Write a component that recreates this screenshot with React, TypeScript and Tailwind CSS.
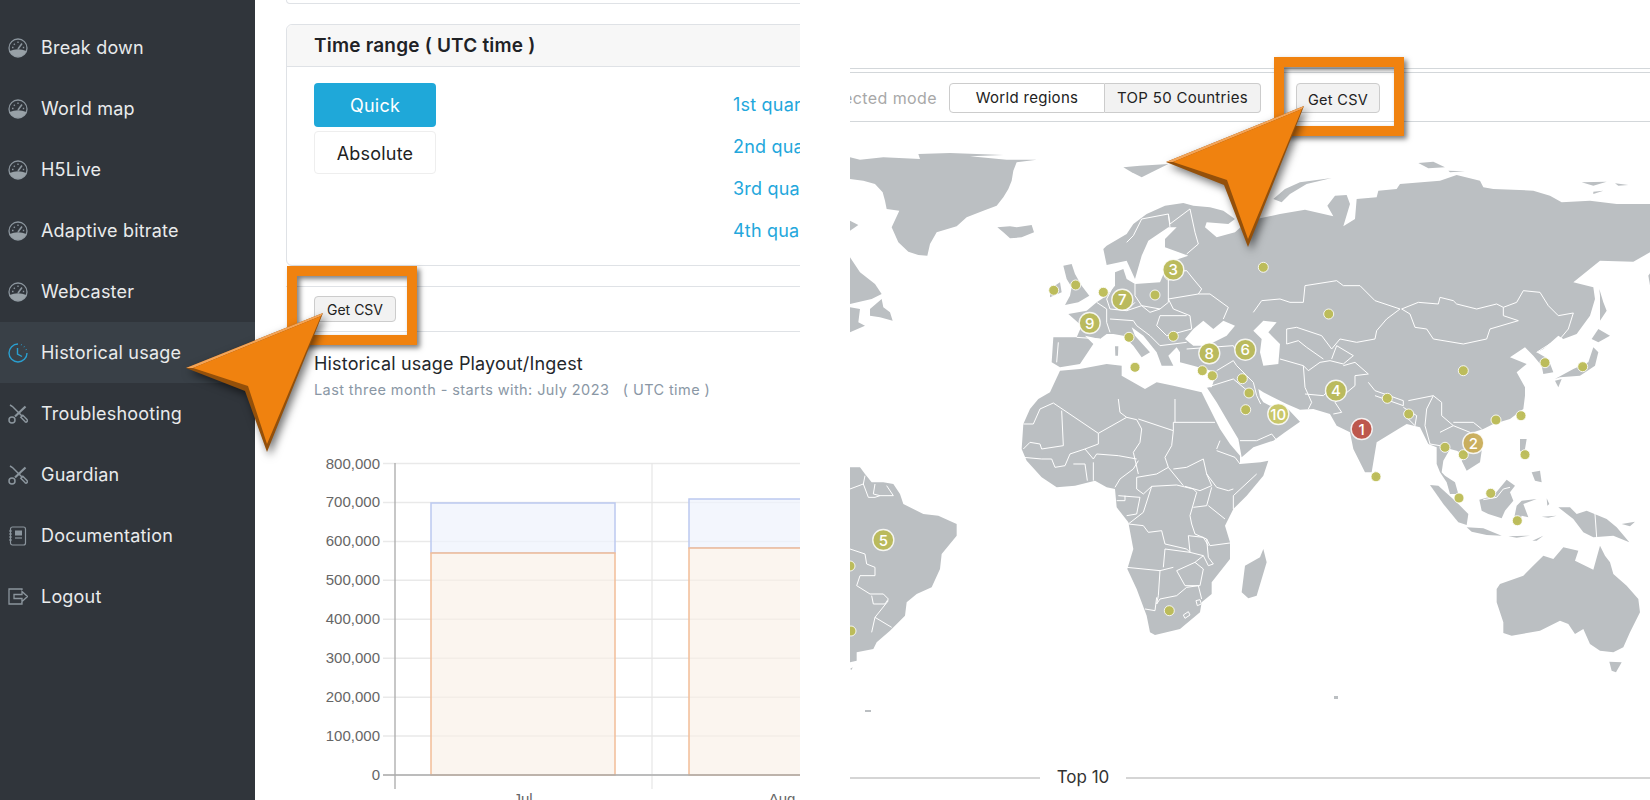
const navItems = [
  { label: "Break down", icon: "gauge" },
  { label: "World map", icon: "gauge" },
  { label: "H5Live", icon: "gauge" },
  { label: "Adaptive bitrate", icon: "gauge" },
  { label: "Webcaster", icon: "gauge" },
  { label: "Historical usage", icon: "clock", active: true },
  { label: "Troubleshooting", icon: "tools" },
  { label: "Guardian", icon: "tools" },
  { label: "Documentation", icon: "doc" },
  { label: "Logout", icon: "logout" },
];

function NavIcon({ name }: { name: string }) {
  if (name === "gauge") {
    return (
      <svg viewBox="0 0 20 20" className="w-[20px] h-[20px] text-[#8b959d]" fill="none" stroke="currentColor" strokeWidth="1.3">
        <circle cx="10" cy="10" r="9" />
        <path d="M1.6 13 Q10 9.5 18.4 13 A9 9 0 0 1 1.6 13Z" fill="#98a1a7" stroke="none" />
        <path d="M10 11 L14 5.5" strokeWidth="1.6" />
        <path d="M4 9.5h1.5M5.8 5.8l1 1M10 3.5v1.5M14.8 9.5h1.4" />
      </svg>
    );
  }
  if (name === "clock") {
    return (
      <svg viewBox="0 0 20 20" className="w-[20px] h-[20px] text-[#2a9fd0]" fill="none" stroke="currentColor" strokeWidth="1.4">
        <path d="M10 1 A9 9 0 1 0 19 10" />
        <path d="M13 1.6 L13.6 1.9M16 3.6 L16.4 4M18 6.4 L18.3 7" />
        <path d="M9.5 5 V11 L14 13.5" />
      </svg>
    );
  }
  if (name === "tools") {
    return (
      <svg viewBox="0 0 20 20" className="w-[20px] h-[20px] text-[#8b959d]" fill="none" stroke="currentColor" strokeWidth="1.5">
        <path d="M2 1 L4.5 2.5 L14 12" />
        <path d="M12.8 13.2 L14.8 11.2 L19 15.6 A1.4 1.4 0 0 1 17 17.6Z" />
        <path d="M17.5 2.5 L7 12.5" strokeWidth="2.2" />
        <circle cx="4" cy="16" r="3" />
      </svg>
    );
  }
  if (name === "doc") {
    return (
      <svg viewBox="0 0 20 20" className="w-[20px] h-[20px] text-[#8b959d]" fill="none" stroke="currentColor" strokeWidth="1.2">
        <rect x="2.5" y="1" width="15" height="18" rx="2" />
        <path d="M1 5h3M1 8h3M1 11h3M1 14h3" />
        <rect x="7" y="4.5" width="7" height="5" fill="currentColor" stroke="none" />
        <path d="M7 12h7" />
      </svg>
    );
  }
  return (
    <svg viewBox="0 0 20 20" className="w-[20px] h-[20px] text-[#8b959d]" fill="none" stroke="currentColor" strokeWidth="1.3">
      <path d="M14 3 V2 H1 V17 H14 V15" />
      <path d="M6 7.5 H14 V4.5 L19.5 9.5 L14 14.5 V11.5 H6Z" />
    </svg>
  );
}

function Sidebar() {
  return (
    <div className="w-[255px] shrink-0 h-full bg-[#30353b] pt-[17px] text-[18px] tracking-[0.2px] text-[#e9ebec]">
      {navItems.map((item) => (
        <div
          key={item.label}
          className={`h-[61px] flex items-center pl-[8px] gap-[13px] ${item.active ? "bg-[#394047]" : ""}`}
        >
          <NavIcon name={item.icon} />
          <span>{item.label}</span>
        </div>
      ))}
    </div>
  );
}

const yLabels = ["800,000", "700,000", "600,000", "500,000", "400,000", "300,000", "200,000", "100,000", "0"];

function UsageChart() {
  const y0 = 462.5;
  const step = 38.94;
  return (
    <svg viewBox="286 450 514 350" className="w-[514px] h-[350px] font-[family-name:'Liberation_Sans',sans-serif]">
      {yLabels.map((label, i) => {
        const y = y0 + step * i;
        return (
          <g key={label}>
            <line x1="383" x2="800" y1={y} y2={y} stroke="#e9e9e9" strokeWidth="1.5" />
            <text x="380" y={y + 5} textAnchor="end" fontSize="15" fill="#666">
              {label}
            </text>
          </g>
        );
      })}
      <line x1="652" x2="652" y1="462" y2="788" stroke="#e6e6e6" strokeWidth="1.2" />
      <rect x="431" y="502" width="184" height="50" fill="#eef2fc" fillOpacity="0.7" stroke="#bcc9ef" strokeWidth="1.5" />
      <rect x="431" y="552" width="184" height="222" fill="#f9efe6" fillOpacity="0.65" stroke="#f2bd98" strokeWidth="1.5" />
      <rect x="689" y="498" width="184" height="49" fill="#eef2fc" fillOpacity="0.7" stroke="#bcc9ef" strokeWidth="1.5" />
      <rect x="689" y="547" width="184" height="227" fill="#f9efe6" fillOpacity="0.65" stroke="#f2bd98" strokeWidth="1.5" />
      <line x1="395" x2="395" y1="462" y2="788" stroke="#a9a9a9" strokeWidth="1.3" />
      <line x1="383" x2="800" y1="774" y2="774" stroke="#ababab" strokeWidth="1.6" />
      <text x="523" y="803" textAnchor="middle" fontSize="15" fill="#666">
        Jul
      </text>
      <text x="782" y="803" textAnchor="middle" fontSize="15" fill="#666">
        Aug
      </text>
    </svg>
  );
}

function HistoricalPanel() {
  return (
    <div className="w-[545px] shrink-0 h-full overflow-hidden pl-[31px]">
      <div className="w-[700px] h-[4px] border-[1.5px] border-t-0 border-[#dfe2e6] rounded-b-[6px]" />
      <div className="w-[700px] h-[242px] mt-[20px] border-[1.5px] border-[#dfe2e6] rounded-[6px]">
        <div className="h-[42px] flex items-center pl-[27px] pt-[2px] bg-[#f7f7f7] border-b-[1.5px] border-[#dfe2e6] rounded-t-[6px] text-[19px] tracking-[0.2px] font-semibold text-[#1f2226]">
          Time range ( UTC time )
        </div>
        <div className="flex pl-[27px] pt-[16px] tracking-[0.2px]">
          <div className="flex flex-col gap-[4px] w-[122px] text-[18px]">
            <div className="h-[44px] flex items-center justify-center rounded-[4px] bg-[#1fa8d9] text-white">Quick</div>
            <div className="h-[43px] pt-[1px] flex items-center justify-center rounded-[4px] border-[1.5px] border-[#eeeeee] text-[#222]">Absolute</div>
          </div>
          <div className="ml-[297px] pt-[1px] text-[18px] leading-[42px] text-[#23a7dc] whitespace-nowrap">
            <div>1st quarter</div>
            <div>2nd quarter</div>
            <div>3rd quarter</div>
            <div>4th quarter</div>
          </div>
        </div>
      </div>
      <div className="w-[700px] h-[46px] mt-[20px] border-y-[1.5px] border-[#dfe2e6] flex items-center pl-[28px]">
        <button className="w-[82px] h-[26px] rounded-[4px] border border-[#cccccc] bg-[#f2f2f2] text-[14px] text-[#222]">Get CSV</button>
      </div>
      <div className="pl-[28px] pt-[19px] text-[18px] leading-[26px] tracking-[0.17px] text-[#24272b] whitespace-nowrap">Historical usage Playout/Ingest</div>
      <div className="pl-[28px] pt-[2px] text-[14.5px] leading-[22px] tracking-[0.41px] text-[#8a97a5] whitespace-pre">
        {"Last three month - starts with: July 2023   ( UTC time )"}
      </div>
      <div className="mt-[50px] -ml-[0px]">
        <UsageChart />
      </div>
    </div>
  );
}

const smallDots = [
  [1053.7, 291.3], [1075.7, 286], [1103.3, 293.3], [1155, 296], [1129, 338.3], [1135, 368.3], [1173.3, 337.3],
  [1202.3, 371.7], [1212.3, 376.7], [1242.3, 379.7], [1249, 394], [1245.7, 410.7], [1169.3, 276],
  [1263.3, 268.3], [1328.7, 315], [1463.3, 371.7], [1545, 363.7], [1582.7, 367.7], [1387.3, 399.3], [1408.7, 415],
  [1496, 421], [1521, 416.7], [1445, 448.3], [1463.3, 455.7], [1525, 455.7], [1376, 477.7],
  [1459, 499], [1490.7, 494.3], [1517.3, 521.7], [1169.3, 611.7], [850, 567], [851, 632],
];

const rankDots = [
  { n: 3, x: 1173.3, y: 270.7, c: "#b9b957" },
  { n: 7, x: 1122.3, y: 300.7, c: "#b9b957" },
  { n: 9, x: 1089.7, y: 324, c: "#b9b957" },
  { n: 8, x: 1209.3, y: 354.3, c: "#b9b957" },
  { n: 6, x: 1245.3, y: 350.7, c: "#b9b957" },
  { n: 4, x: 1336, y: 391.7, c: "#b9b957" },
  { n: 10, x: 1278.3, y: 415, c: "#c9c765" },
  { n: 1, x: 1361.7, y: 430, c: "#bd5146" },
  { n: 2, x: 1473.3, y: 444, c: "#c9ad58" },
  { n: 5, x: 883.3, y: 541, c: "#b9b957" },
];

const land = "#bbbfc2";

function WorldMap() {
  return (
    <svg viewBox="850 130 800 635" className="w-[800px] h-[635px] font-[family-name:Inter,sans-serif]">
      {/* north atlantic, europe, asia */}
      <g transform="translate(840 140) scale(0.33333)" fill={land}>
        <polygon points="30,55 60,62 130,55 240,60 235,45 330,42 490,48 390,52 500,62 590,62 530,70 520,95 515,125 505,150 490,175 470,200 430,215 380,235 350,262 290,280 270,315 262,350 235,348 205,338 175,310 155,265 178,215 140,210 135,185 128,160 105,135 70,125 30,120" />
        <polygon points="30,245 55,258 30,275" />
        <polygon points="30,355 60,400 105,435 125,465 95,480 30,495" />
        <polygon points="90,510 125,480 130,505 150,520 158,545 120,535 90,530" />
        <polygon points="30,505 60,510 55,550 75,560 30,580" />
        <polygon points="472,265 510,262 530,265 575,258 582,280 545,295 510,298 490,280" />
        <polygon points="850,85 900,80 985,75 935,100 905,115 875,100" />
        <polygon points="670,380 695,375 705,405 725,440 748,470 715,490 675,498 690,470 695,445 680,420" />
        <polygon points="630,450 660,430 665,460 630,475" />
        <polygon points="825,622 835,622 834,650 826,650" />
        <polygon points="790,330 800,320 860,285 880,255 920,225 975,200 1030,192 1060,200 1110,205 1150,215 1185,240 1165,255 1100,250 1095,265 1130,295 1185,280 1205,262 1260,238 1320,225 1395,212 1480,232 1462,200 1485,170 1520,168 1530,195 1510,262 1545,240 1550,180 1610,175 1615,155 1670,150 1680,135 1800,125 1850,108 1920,125 1930,145 1960,150 2080,155 2130,170 2165,190 2250,185 2330,195 2430,195 2430,340 2380,368 2280,365 2200,430 2260,445 2265,480 2250,530 2210,585 2170,600 2155,590 2110,630 2090,640 2125,660 2140,700 2110,705 2105,680 2080,650 2055,625 2010,655 2060,675 2030,700 2055,745 2055,770 2050,810 2010,840 1960,855 1930,870 1900,880 1925,935 1920,970 1880,995 1865,965 1880,950 1850,935 1830,930 1810,965 1805,1000 1815,1010 1845,1030 1855,1065 1830,1065 1820,1030 1800,1000 1790,975 1790,925 1765,915 1740,865 1700,855 1675,870 1610,910 1595,1000 1575,1000 1540,930 1530,880 1490,860 1470,825 1420,810 1380,812 1340,795 1270,760 1255,750 1260,775 1270,790 1290,800 1330,795 1380,848 1335,880 1300,905 1240,925 1205,955 1195,900 1165,850 1130,790 1100,745 1115,745 1130,700 1060,680 1020,670 1020,640 1010,625 985,650 1000,680 965,680 950,640 910,590 875,565 885,590 930,640 905,655 880,620 850,590 820,585 800,585 780,600 735,590 760,615 720,675 660,685 635,670 640,595 710,595 725,560 685,525 740,515 770,490 800,470 825,440 825,400 850,390 860,420 885,435 960,430 975,395 1000,365 1045,350 975,325 975,300 1010,265 985,265 925,305 905,350 885,420 860,365 800,378" />
        {/* inland seas */}
        <polygon fill="#ffffff" points="1035,600 1060,570 1090,545 1120,570 1150,545 1185,560 1160,590 1130,605 1100,620 1060,620" />
        <polygon fill="#ffffff" points="1240,575 1270,545 1310,550 1285,580 1320,615 1315,675 1270,680 1260,640 1265,600" />
        {/* asia islands */}
        <polygon points="1735,72 1780,68 1815,85 1765,88" />
        <polygon points="1825,95 1875,97 1830,100" />
        <polygon points="2225,130 2300,128 2260,140" />
        <polygon points="2325,133 2365,138 2335,140" />
        <polygon points="2260,158 2290,155 2260,165" />
        <polygon points="1300,180 1335,150 1380,130 1475,117 1400,135 1350,165 1325,190" />
        <polygon points="2145,720 2200,690 2245,670 2260,625 2275,640 2265,680 2220,710 2160,715" />
        <polygon points="2255,600 2275,570 2310,590 2275,610" />
        <polygon points="2145,725 2165,720 2155,745" />
        <polygon points="2278,450 2290,490 2300,515 2280,545 2280,470" />
        <polygon points="1605,995 1618,1015 1600,1025" />
        <polygon points="2045,820 2052,815 2048,840" />
        <polygon points="2425,410 2432,400 2432,450" />
        {/* borders */}
        <g fill="none" stroke="#ffffff" strokeWidth="3" strokeLinejoin="round">
          <polyline points="860,310 880,290 905,240 985,225 990,255 1050,210 1065,280 1075,315 1040,345" />
          <polyline points="985,225 990,265" />
          <polyline points="975,400 1040,395 1060,420 1085,450 1075,465 1110,465 1165,505 1150,540" />
          <polyline points="985,405 985,490 960,510 905,500 885,470 885,435" />
          <polyline points="1075,465 985,480 1000,510 1050,530 1055,570 980,590 950,560 960,530 1040,530" />
          <polyline points="820,440 800,480 810,510 860,515 885,490" />
          <polyline points="770,490 800,510 800,550 810,580" />
          <polyline points="810,540 880,545 890,560 930,590 960,620 1040,610" />
          <polyline points="860,515 905,500 930,520 960,510" />
          <polyline points="710,595 780,600" />
          <polyline points="655,610 650,670" />
          <polyline points="1130,695 1180,665 1190,680 1240,730 1250,770 1262,795" />
          <polyline points="1040,630 1180,620 1200,660" />
          <polyline points="1100,745 1180,720 1240,770" />
          <polyline points="1240,520 1265,485 1320,480 1350,490 1390,490 1395,440 1490,425 1510,440 1560,440 1605,485 1680,510 1640,540 1610,575 1605,600 1550,610 1500,600 1475,630" />
          <polyline points="1340,570 1370,565 1445,590 1475,630" />
          <polyline points="1340,570 1340,615 1375,605 1400,625 1450,660" />
          <polyline points="1320,660 1390,680 1405,695 1440,670 1470,665 1510,675 1540,650 1490,620 1475,660" />
          <polyline points="1390,680 1395,745 1415,790 1405,810" />
          <polyline points="1395,765 1450,770 1490,730" />
          <polyline points="1510,680 1545,670 1585,705 1545,710 1545,740 1485,790 1505,820 1480,825" />
          <polyline points="1585,730 1605,755 1690,785 1690,800 1605,770" />
          <polyline points="1705,785 1780,770 1805,790 1805,830 1840,860" />
          <polyline points="1690,805 1730,830 1725,860 1695,830" />
          <polyline points="1780,770 1760,810 1755,860 1770,915 1800,920" />
          <polyline points="1800,880 1840,860 1890,880" />
          <polyline points="1840,850 1900,850 1925,870" />
          <polyline points="1685,510 1735,490 1795,495 1800,475 1840,485 1850,495 1910,510 1970,495 1990,505 1990,530 2035,545 1950,570 1940,600 1870,615 1780,600 1760,570 1725,565 1710,525 1685,510" />
          <polyline points="1990,505 2030,490 2050,455 2100,460 2125,500 2155,530 2200,522 2185,570 2160,600" />
          <polyline points="2090,640 2145,605" />
        </g>
      </g>

      {/* africa */}
      <g transform="translate(1000 400) scale(0.33333)" fill={land}>
        <polygon points="150,-20 180,-85 240,-90 320,-105 365,-100 365,-70 435,-30 470,-50 520,-40 605,-20 615,0 660,90 690,135 720,170 720,195 782,190 805,185 790,230 740,290 700,330 675,380 690,430 690,480 635,550 635,585 605,610 600,640 540,690 465,708 450,700 440,650 410,570 382,510 400,450 385,370 350,325 345,270 320,265 285,245 225,260 170,265 125,235 80,185 65,150 70,75 90,30 115,0" />
        <polygon points="790,450 800,490 770,590 745,598 725,580 735,500 780,475" />
        <g fill="none" stroke="#ffffff" strokeWidth="3" strokeLinejoin="round">
          <polyline points="160,12 295,103 380,55 410,62 425,90 420,130 400,160 415,225" />
          <polyline points="415,60 520,95 520,70 645,70" />
          <polyline points="525,0 525,70" />
          <polyline points="355,0 360,40 380,55" />
          <polyline points="295,103 295,135 255,150 210,165 195,200 165,205 155,180 125,180 70,175" />
          <polyline points="185,35 190,140 125,150 120,135 90,130 70,150" />
          <polyline points="70,75 100,75 120,30 160,12" />
          <polyline points="220,195 255,195 262,245" />
          <polyline points="280,190 280,245" />
          <polyline points="255,150 280,180 290,165 355,170 410,180" />
          <polyline points="415,185 400,210 360,240 345,265" />
          <polyline points="520,95 515,140 495,175 505,205 470,225 410,235 410,270 430,285 455,262 530,258 580,270 590,280" />
          <polyline points="505,205 550,260" />
          <polyline points="455,262 430,340 385,375 430,380 445,400 485,395 495,435 560,450 570,460 565,410 610,415 625,440" />
          <polyline points="650,150 660,125" />
          <polyline points="650,155 705,175 720,195" />
          <polyline points="620,225 650,265 685,275 700,270" />
          <polyline points="520,210 560,205 610,180 620,225 635,260 600,275 555,262" />
          <polyline points="700,330 700,290 770,225" />
          <polyline points="625,320 675,360" />
          <polyline points="590,280 570,350 575,375 585,405 620,420 630,440 690,432" />
          <polyline points="635,265 620,320 580,325" />
          <polyline points="380,505 480,515 520,505" />
          <polyline points="495,450 490,505" />
          <polyline points="495,450 570,460 610,470 585,490 530,515 555,560 600,560 610,510 585,490" />
          <polyline points="620,420 625,475 640,495 625,500 610,470" />
          <polyline points="480,515 475,590 470,615 480,600 530,590 560,565 595,560 605,600" />
          <polyline points="470,595 465,635 435,630" />
          <polyline points="355,290 420,295 410,345 380,350" />
          <polyline points="350,305 375,305 375,290" />
          <polyline points="720,125 770,125 815,105 835,130" />
          <polygon points="550,648 565,638 570,648 555,658" />
          <polygon points="588,605 600,602 604,615 592,620" />
        </g>
      </g>

      {/* south east asia and australia */}
      <g transform="translate(1400 440) scale(0.33333)" fill={land}>
        <polygon points="90,138 115,140 170,190 205,225 200,258 175,250 130,195" />
        <polygon points="200,265 250,268 305,290 260,288 215,278" />
        <polygon points="238,182 280,170 320,122 345,140 330,160 340,185 315,215 305,238 265,225 245,215" />
        <polygon points="350,200 365,185 410,180 370,195 385,235 365,230 355,255 340,250" />
        <polygon points="360,0 380,0 375,30 385,55 360,35" />
        <polygon points="395,100 420,95 425,130 405,125" />
        <polygon points="475,205 510,205 530,225 560,215 620,240 650,265 688,310 640,290 580,295 550,280 520,240" />
        <polygon points="425,233 470,230 445,236" />
        <polygon points="325,292 390,290 350,296" />
        <polygon points="397,305 430,290 410,305" />
        <polygon points="665,255 705,248 690,262" />
        <polygon points="440,178 448,195 442,200" />
        <polygon points="290,450 300,435 370,410 395,385 430,350 460,360 490,325 535,335 525,365 580,392 600,320 615,350 630,370 640,405 680,440 715,480 720,520 690,580 670,625 640,640 600,635 570,615 550,570 525,585 505,555 480,545 420,575 335,590 310,582 310,550 290,490" />
        <polygon points="628,668 665,670 648,700 635,695" />
        <g fill="none" stroke="#ffffff" strokeWidth="3">
          <polyline points="585,225 590,295" />
          <polyline points="250,182 290,175 310,150 330,145" />
        </g>
      </g>

      {/* south america */}
      <g transform="translate(850 440) scale(0.33333)" fill={land}>
        <polygon points="0,85 30,85 45,105 65,130 100,130 130,135 150,165 160,195 220,225 265,230 320,255 320,290 275,345 270,390 245,445 200,465 170,490 165,530 120,575 80,610 70,630 20,640 20,665 0,670" />
        <polygon points="0,690 8,685 5,692" />
        <g fill="none" stroke="#ffffff" strokeWidth="3" strokeLinejoin="round">
          <polyline points="0,150 40,135 45,110" />
          <polyline points="40,135 55,175 75,175 90,170 130,170 110,140" />
          <polyline points="75,135 70,165 90,170" />
          <polyline points="0,330 45,345 50,375 75,385 75,410 30,410 20,440 60,465 100,465 115,480 105,495 70,495 65,470" />
          <polyline points="115,485 75,535 65,580" />
          <polyline points="75,535 125,565" />
        </g>
      </g>

      {/* specks */}
      <rect x="1334" y="697" width="4" height="3" fill={land} />
      <rect x="865" y="711" width="6" height="2" fill={land} />

      {smallDots.map(([x, y], i) => (
        <circle key={i} cx={x} cy={y} r="5" fill="#bcbc55" fillOpacity="0.95" stroke="#ffffff" strokeOpacity="0.85" strokeWidth="1" />
      ))}
      {rankDots.map((d) => (
        <g key={d.n}>
          <circle cx={d.x} cy={d.y} r="10.5" fill={d.c} fillOpacity="0.95" stroke="#ffffff" strokeOpacity="0.85" strokeWidth="1.4" />
          <text x={d.x} y={d.y + 5.5} textAnchor="middle" fontSize="15" fontWeight="500" fill="#ffffff">
            {d.n}
          </text>
        </g>
      ))}
    </svg>
  );
}

function MapPanel() {
  return (
    <div className="ml-[50px] w-[800px] shrink-0 h-full overflow-hidden pt-[68px]">
      <div className="h-[5px] border-y border-[#d3d7da]" />
      <div className="h-[49px] border-b border-[#d3d7da] flex items-start pt-[10px]">
        <div className="w-[87px] h-[30px] flex justify-end items-center overflow-hidden whitespace-nowrap text-[16px] tracking-[0.4px] text-[#a8a8a8]">
          Selected mode
        </div>
        <div className="ml-[12px] flex h-[30px] text-[15px] tracking-[0.3px] text-[#222]">
          <div className="w-[156px] flex items-center justify-center border border-[#cccccc] rounded-l-[4px] bg-white">World regions</div>
          <div className="w-[156px] flex items-center justify-center border border-l-0 border-[#cccccc] rounded-r-[4px] bg-[#f2f2f2]">TOP 50 Countries</div>
        </div>
        <button className="ml-[35px] w-[84px] h-[30px] pt-[3px] rounded-[4px] border border-[#cccccc] bg-[#f2f2f2] text-[14.5px] tracking-[0.3px] text-[#222]">Get CSV</button>
      </div>
      <div className="mt-[7px]">
        <WorldMap />
      </div>
      <div className="flex items-center h-[24px] mt-[2px]">
        <div className="w-[190px] h-[1.5px] bg-[#d5d5d5]" />
        <span className="w-[86px] text-center text-[17px] text-[#333]">Top 10</span>
        <div className="flex-1 h-[1.5px] bg-[#d5d5d5]" />
      </div>
    </div>
  );
}

type Pt = [number, number];
function poly(p: Pt[]) {
  return p.map((q) => q.join(",")).join(" ");
}

// pointer with a bevelled edge; a = tip, b = left wing, c = notch, d = bottom tip
function Pointer({ a, b, c, d, a2, b2, c2, d2 }: { a: Pt; b: Pt; c: Pt; d: Pt; a2: Pt; b2: Pt; c2: Pt; d2: Pt }) {
  return (
    <g className="drop-shadow-[3px_4px_4px_rgba(0,0,0,0.55)]">
      <polygon points={poly([a, b, c, d])} fill="#94500a" />
      <polygon points={poly([a, b, b2, a2])} fill="#f4a457" />
      <polygon points={poly([a2, b2, c2, d2])} fill="#f0820f" />
    </g>
  );
}

export default function App() {
  return (
    <div className="relative flex w-[1650px] h-[800px] overflow-hidden bg-white font-[family-name:Inter,sans-serif]">
      <Sidebar />
      <HistoricalPanel />
      <MapPanel />

      {/* callouts */}
      <div className="absolute left-[287px] top-[266px] w-[130px] h-[79px] border-[10px] border-[#f0820f] shadow-[3px_3px_5px_rgba(0,0,0,0.5),inset_3px_3px_5px_rgba(0,0,0,0.5)]" />
      <div className="absolute left-[1274px] top-[57px] w-[130px] h-[79px] border-[10px] border-[#f0820f] shadow-[3px_3px_5px_rgba(0,0,0,0.5),inset_3px_3px_5px_rgba(0,0,0,0.5)]" />
      <svg viewBox="0 0 1650 800" className="absolute inset-0 w-[1650px] h-[800px] pointer-events-none">
        <Pointer a={[323, 313]} b={[186, 368]} c={[245, 391]} d={[267, 452]} a2={[321, 316]} b2={[193, 368]} c2={[248, 386]} d2={[267, 444]} />
        <Pointer a={[1304, 106]} b={[1166, 162]} c={[1224, 185]} d={[1248, 247]} a2={[1302, 109]} b2={[1173, 162]} c2={[1227, 180]} d2={[1248, 239]} />
      </svg>
    </div>
  );
}
